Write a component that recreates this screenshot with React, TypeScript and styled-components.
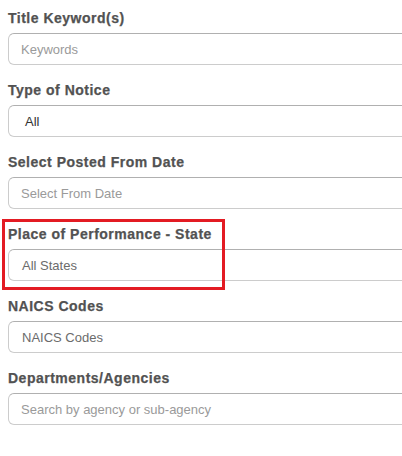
import styled, { createGlobalStyle } from "styled-components";

const GlobalStyle = createGlobalStyle`
    html, body {
        margin: 0;
        padding: 0;
        background: #ffffff;
        overflow: hidden;
    }
    body {
        font-family: "Liberation Sans", Arial, sans-serif;
    }
`;

interface IFilter {
    label: string;
    value: string;
    tone: "placeholder" | "value" | "muted";
    indent?: number;
    highlighted?: boolean;
}

const FILTERS: IFilter[] = [
    { label: "Title Keyword(s)", value: "Keywords", tone: "placeholder" },
    { label: "Type of Notice", value: "All", tone: "value", indent: 16 },
    { label: "Select Posted From Date", value: "Select From Date", tone: "placeholder" },
    {
        label: "Place of Performance - State",
        value: "All States",
        tone: "muted",
        indent: 13,
        highlighted: true,
    },
    { label: "NAICS Codes", value: "NAICS Codes", tone: "muted", indent: 13 },
    {
        label: "Departments/Agencies",
        value: "Search by agency or sub-agency",
        tone: "placeholder",
    },
];

const TONES = {
    placeholder: "#9a9a9a",
    value: "#333333",
    muted: "#6b6b6b",
};

const Panel = styled.div`
    width: 430px;
    padding: 10px 0 0 8px;
`;

const Group = styled.div`
    position: relative;
    margin-bottom: 17px;
`;

const Label = styled.div`
    font-size: 14px;
    line-height: 16px;
    font-weight: 700;
    letter-spacing: 0.5px;
    color: #525252;
    -webkit-text-stroke: 0.25px #525252;
    margin-bottom: 7px;
`;

const Field = styled.div<{ $indent: number }>`
    box-sizing: border-box;
    display: flex;
    align-items: center;
    height: 32px;
    padding-left: ${(p) => p.$indent}px;
    border: 1px solid #cccccc;
    border-top-color: #b0b0b0;
    border-radius: 6px;
    background: #ffffff;
`;

const FieldText = styled.span<{ $tone: keyof typeof TONES }>`
    font-size: 13px;
    color: ${(p) => TONES[p.$tone]};
`;

const Highlight = styled.div`
    position: absolute;
    top: -7px;
    left: -6px;
    width: 223px;
    height: 71px;
    box-sizing: border-box;
    border: 3px solid #e31b23;
    pointer-events: none;
`;

const App = () => {
    return (
        <>
            <GlobalStyle />
            <Panel>
                {FILTERS.map((filter) => (
                    <Group key={filter.label}>
                        <Label>{filter.label}</Label>
                        <Field $indent={filter.indent ?? 12}>
                            <FieldText $tone={filter.tone}>{filter.value}</FieldText>
                        </Field>
                        {filter.highlighted && <Highlight />}
                    </Group>
                ))}
            </Panel>
        </>
    );
};

export default App;
